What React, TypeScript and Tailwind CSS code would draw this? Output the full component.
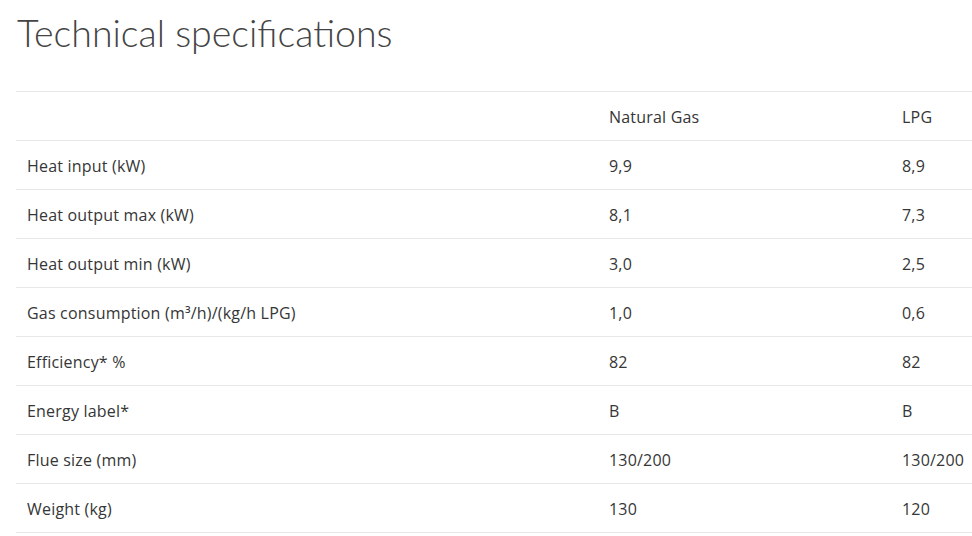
const rows: [string, string, string][] = [
  ["Heat input (kW)", "9,9", "8,9"],
  ["Heat output max (kW)", "8,1", "7,3"],
  ["Heat output min (kW)", "3,0", "2,5"],
  ["Gas consumption (m³/h)/(kg/h LPG)", "1,0", "0,6"],
  ["Efficiency* %", "82", "82"],
  ["Energy label*", "B", "B"],
  ["Flue size (mm)", "130/200", "130/200"],
  ["Weight (kg)", "130", "120"],
];

export default function App() {
  return (
    <div className="min-h-[536px] bg-white pl-4 text-[#363636]">
      <h1 className="pt-[9px] pl-px font-['Lato',sans-serif] text-[37.5px] leading-[48px] font-light text-[#444]">
        Technical specifications
      </h1>
      <table className="mt-[34px] w-[956px] table-fixed border-collapse font-['Open_Sans',sans-serif] text-[16px] tracking-[0.2px]">
        <colgroup>
          <col className="w-[582px]" />
          <col className="w-[293px]" />
          <col className="w-[81px]" />
        </colgroup>
        <thead>
          <tr className="h-[49px] border-y border-[#e8e8e8]">
            <th className="px-[11px] pt-px" />
            <th className="px-[11px] pt-px text-left font-normal">Natural Gas</th>
            <th className="px-[11px] pt-px text-left font-normal">LPG</th>
          </tr>
        </thead>
        <tbody>
          {rows.map(([label, ng, lpg]) => (
            <tr key={label} className="h-[49px] border-b border-[#e8e8e8]">
              <td className="px-[11px] pt-px">{label}</td>
              <td className="px-[11px] pt-px">{ng}</td>
              <td className="px-[11px] pt-px whitespace-nowrap">{lpg}</td>
            </tr>
          ))}
        </tbody>
      </table>
    </div>
  );
}
